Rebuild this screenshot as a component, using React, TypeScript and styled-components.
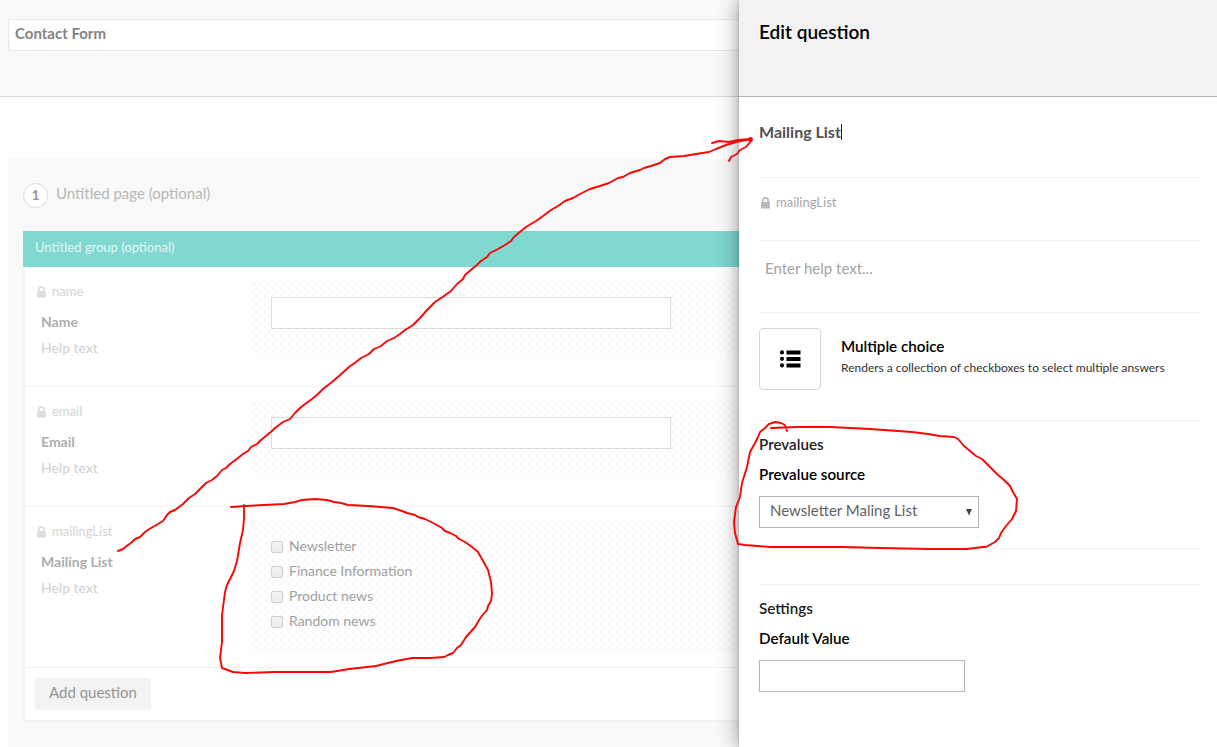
import React from "react";
import styled, { createGlobalStyle } from "styled-components";

const GlobalStyle = createGlobalStyle`
  * { box-sizing: border-box; }
  body { margin: 0; font-family: Lato, "Liberation Sans", sans-serif; font-size: 15px; line-height: 20px; color: #000; background: #fff; }
`;

const Shell = styled.div`
  position: relative;
  display: flex;
  width: 1217px;
  height: 747px;
  overflow: hidden;
`;

const Editor = styled.main`
  width: 739px;
  flex: none;
  display: flex;
  flex-direction: column;
  overflow: hidden;
`;

const EditorHeader = styled.header`
  height: 97px;
  flex: none;
  padding: 19px 0 0 8px;
  background: #f9f9f9;
  border-bottom: 1px solid #d7d6de;
`;

const FormName = styled.div`
  height: 32px;
  padding: 3px 6px;
  background: #fff;
  border: 1px solid #e8e8e8;
  border-right: 0;
  font-weight: 700;
  color: #848484;
`;

const FormPage = styled.section`
  flex: 1;
  margin: 62px 0 0 8px;
  padding: 23px 0 0 15px;
  background: #f9f9f9;
`;

const PageTitle = styled.div`
  display: flex;
  height: 49px;
  align-items: flex-start;
  gap: 8px;
  color: #b6b6b6;
  line-height: 22px;
`;

const PageNumber = styled.span`
  width: 25px;
  height: 25px;
  margin-top: 1px;
  border: 1px solid #dcdcdc;
  border-radius: 50%;
  background: #fff;
  color: #98979e;
  font-size: 14px;
  font-weight: 700;
  line-height: 21px;
  text-align: center;
`;

const Group = styled.div`
  border-bottom: 2px solid #f3f3f3;
  background: #fff;
`;

const GroupTitle = styled.div`
  height: 36px;
  padding: 6px 12px;
  background: #80d8d0;
  color: #e4f7f5;
  font-size: 13px;
`;

const GroupBody = styled.div`
  border-left: 2px solid #f3f3f3;
`;

const QuestionRow = styled.div<{ $height: number }>`
  display: flex;
  height: ${(p) => p.$height}px;
  padding: 15px 0 15px 11px;
  border-bottom: 1px solid #f3f3f3;
`;

const QuestionInfo = styled.div`
  width: 215px;
  flex: none;
`;

const Alias = styled.div<{ $strong?: boolean }>`
  display: flex;
  align-items: center;
  gap: 3px;
  height: 20px;
  padding-left: ${(p) => (p.$strong ? 1 : 0)}px;
  font-size: 13px;
  line-height: 18px;
  color: ${(p) => (p.$strong ? "#a5a5a8" : "#d3d3d3")};
  svg { fill: ${(p) => (p.$strong ? "#bbbabf" : "#dddde0")}; }
`;

const AliasText = styled.span`
  height: 20px;
`;

const QuestionLabel = styled.div`
  margin: 10px 0 6px 5px;
  font-size: 14px;
  font-weight: 700;
  color: #adadad;
`;

const HelpText = styled.div`
  margin-left: 5px;
  font-size: 14px;
  color: #d0d0d0;
`;

const Preview = styled.div<{ $height: number }>`
  flex: 1;
  height: ${(p) => p.$height}px;
  padding: 15px 20px;
  background: conic-gradient(#fff 25%, #fafafa 0 50%, #fff 0 75%, #fafafa 0) 0 0 / 8px 8px;
`;

const PreviewInput = styled.div`
  width: 400px;
  height: 32px;
  border: 1px solid #dcdcdc;
  background: #fff;
`;

const Choice = styled.div`
  display: flex;
  align-items: center;
  gap: 6px;
  height: 25px;
  font-size: 14px;
  color: #a0a0a0;
  &:first-child { margin-top: -4px; }
`;

const Box = styled.span`
  width: 12px;
  height: 12px;
  margin-top: 3px;
  border: 1px solid #d0d0d0;
  border-radius: 2px;
  background: linear-gradient(#f3f3f3, #ececec);
`;

const GroupFooter = styled.div`
  height: 52px;
  padding: 10px;
`;

const AddButton = styled.div`
  width: 116px;
  height: 32px;
  border-radius: 3px;
  background: #f3f3f3;
  color: #949494;
  line-height: 28px;
  text-align: center;
`;

const Panel = styled.aside`
  width: 478px;
  background: #fff;
  box-shadow: 0 0 20px rgba(0, 0, 0, 0.42), 0 0 3px rgba(0, 0, 0, 0.2);
`;

const PanelHeader = styled.header`
  height: 97px;
  padding: 20px;
  background: #f2f2f4;
  border-bottom: 1px solid #b0afbd;
  font-size: 19px;
  font-weight: 600;
  line-height: 24px;
`;

const PanelBody = styled.div`
  padding: 0 15px 0 20px;
`;

const Block = styled.div<{ $height: number; $top: number; $plain?: boolean }>`
  height: ${(p) => p.$height}px;
  padding-top: ${(p) => p.$top}px;
  border-bottom: ${(p) => (p.$plain ? "0" : "1px solid #f2f2f3")};
`;

const QuestionName = styled.div`
  display: flex;
  align-items: center;
  font-size: 16px;
  font-weight: 700;
  color: #515054;
`;

const Caret = styled.span`
  width: 1px;
  height: 16px;
  background: #222;
`;

const HelpPrompt = styled.div`
  padding-left: 6px;
  color: #a2a2a2;
`;

const TypePicker = styled.div`
  display: flex;
  gap: 20px;
`;

const TypeTile = styled.div`
  display: flex;
  align-items: center;
  justify-content: center;
  width: 62px;
  height: 62px;
  border: 1px solid #d5d5d8;
  border-radius: 4px;
`;

const TypeText = styled.div`
  padding-top: 8px;
`;

const TypeDescription = styled.div`
  margin-top: 2px;
  font-size: 12px;
  color: #333;
`;

const Heading = styled.div<{ $soft?: boolean }>`
  height: 20px;
  font-size: 15.2px;
  font-weight: 600;
  color: ${(p) => (p.$soft ? "#222" : "#000")};
  & + & { margin-top: 10px; }
`;

const Select = styled.div`
  display: flex;
  align-items: center;
  justify-content: space-between;
  width: 220px;
  height: 32px;
  margin-top: 12px;
  padding: 0 5px 4px 10px;
  border: 1px solid #b5b4bc;
  color: #626262;
  svg { margin-top: 3px; }
`;

const ValueInput = styled.div`
  width: 206px;
  height: 32px;
  margin-top: 12px;
  border: 1px solid #b5b4bc;
`;

const Ink = styled.svg`
  position: absolute;
  inset: 0;
  fill: none;
  stroke: #fb0505;
  stroke-width: 1.9;
  stroke-linecap: round;
  stroke-linejoin: round;
`;

const Lock = () => (
  <svg width="13" height="12" viewBox="0 0 13 12">
    <path d="M1 5h1V3.5a3.5 3.5 0 0 1 7 0V5h1v6.5H1zM3.7 5h3.6V3.5a1.8 1.8 0 0 0-3.6 0z" />
  </svg>
);

const textQuestions = [
  { alias: "name", label: "Name" },
  { alias: "email", label: "Email" },
];
const choices = ["Newsletter", "Finance Information", "Product news", "Random news"];

function Info({ alias, label }: { alias: string; label: string }) {
  return (
    <QuestionInfo>
      <Alias><Lock /><AliasText>{alias}</AliasText></Alias>
      <QuestionLabel>{label}</QuestionLabel>
      <HelpText>Help text</HelpText>
    </QuestionInfo>
  );
}

export default function App() {
  return (
    <Shell>
      <GlobalStyle />
      <Editor>
        <EditorHeader><FormName>Contact Form</FormName></EditorHeader>
        <FormPage>
          <PageTitle><PageNumber>1</PageNumber>Untitled page (optional)</PageTitle>
          <Group>
            <GroupTitle>Untitled group (optional)</GroupTitle>
            <GroupBody>
              {textQuestions.map((q) => (
                <QuestionRow key={q.alias} $height={120}>
                  <Info {...q} />
                  <Preview $height={72}><PreviewInput /></Preview>
                </QuestionRow>
              ))}
              <QuestionRow $height={161}>
                <Info alias="mailingList" label="Mailing List" />
                <Preview $height={130}>
                  {choices.map((c) => <Choice key={c}><Box />{c}</Choice>)}
                </Preview>
              </QuestionRow>
              <GroupFooter><AddButton>Add question</AddButton></GroupFooter>
            </GroupBody>
          </Group>
        </FormPage>
      </Editor>
      <Panel>
        <PanelHeader>Edit question</PanelHeader>
        <PanelBody>
          <Block $height={81} $top={25}>
            <QuestionName>Mailing List<Caret /></QuestionName>
          </Block>
          <Block $height={63} $top={15}>
            <Alias $strong><Lock /><AliasText>mailingList</AliasText></Alias>
          </Block>
          <Block $height={72} $top={17}><HelpPrompt>Enter help text...</HelpPrompt></Block>
          <Block $height={108} $top={15}>
            <TypePicker>
              <TypeTile>
                <svg width="22" height="18" viewBox="0 0 22 18">
                  <circle cx="3" cy="2.4" r="2.1" /><circle cx="3" cy="8.8" r="2.1" /><circle cx="3" cy="15.4" r="2.1" />
                  <path d="M7.5 .5h14v4h-14zM7.5 7h14v4h-14zM7.5 13.5h14v4h-14z" />
                </svg>
              </TypeTile>
              <TypeText>
                <Heading>Multiple choice</Heading>
                <TypeDescription>Renders a collection of checkboxes to select multiple answers</TypeDescription>
              </TypeText>
            </TypePicker>
          </Block>
          <Block $height={128} $top={13}>
            <Heading $soft>Prevalues</Heading>
            <Heading>Prevalue source</Heading>
            <Select>
              Newsletter Maling List
              <svg width="8" height="8" viewBox="0 0 8 8"><path d="M1 1h6L4 7.5z" fill="#444" /></svg>
            </Select>
          </Block>
          <Block $height={36} $top={0} />
          <Block $height={120} $top={13} $plain>
            <Heading $soft>Settings</Heading>
            <Heading>Default Value</Heading>
            <ValueInput />
          </Block>
        </PanelBody>
      </Panel>
      <Ink width="1217" height="747" viewBox="0 0 1217 747">
        <path d="M118 551L123 549 128 545 131 543 135 539 140 537 145 532 151 528 158 524 163 521 167 515 170 512 175 510 179 507 183 504 189 498 195 494 200 489 206 483 212 480 217 476 222 470 226 468 230 464 238 458 243 454 248 451 251 447 257 444 261 440 267 435 272 431 275 428 283 422 290 419 295 413 300 408 305 404 312 399 318 394 323 389 332 382 339 376 349 367 356 362 361 358 369 354 374 349 381 346 387 341 394 338 400 334 405 330 413 325 420 318 428 309 435 302 444 296 451 291 457 284 463 279 465 275 472 269 477 265 481 261 487 257 490 253 498 249 505 245 511 241 514 237 521 231 526 227 536 221 543 216 551 210 558 206 565 201 573 198 580 194 590 189 600 186 609 183 618 178 623 177 630 173 640 170 644 168 651 166 660 163 665 159 670 157 684 156 696 154 709 152 716 149 726 145 736 142 751 139" />
        <path d="M712 143L719 141 729 142 738 140 751 139M751 141L746 147 740 150 737 154 731 157 729 161" />
        <circle cx="750.5" cy="139.5" r="1.5" fill="#f80808" />
        <path d="M231 507L246 506 264 505 284 504 295 502 302 500 315 499 327 500 334 502 341 503 348 505 368 506 393 508 402 511 407 513 415 515 418 517 425 519 435 524 442 528 445 531 450 533 456 536 459 539 465 542 472 547 478 552 483 561 488 570 491 582 492 594 491 601 488 606 487 610 481 617 475 627 466 637 461 645 457 648 453 653 448 655 444 657 430 658 412 658 396 661 376 666 349 669 331 672 300 672 275 672 245 673 233 672 222 668 220 658 222 642 222 615 225 592 227 585 234 571 237 561 240 543 243 530 244 518 244 505" />
        <path d="M787 431L785 425 781 423 775 422 769 424 765 428 760 432 758 437 755 443 750 452 747 467 742 483 740 497 736 507 734 522 735 533 738 544 745 545 770 547 800 547 843 547 880 548 930 549 967 549 983 547 986 547 995 542 999 538 1001 533 1006 526 1012 519 1016 511 1017 499 1013 492 1010 486 1004 480 998 475 996 473 989 466 982 459 976 456 970 451 964 446 958 439 954 437 940 436 928 434 912 432 898 431 870 429 850 428 830 427 797 427 771 428" />
      </Ink>
    </Shell>
  );
}
